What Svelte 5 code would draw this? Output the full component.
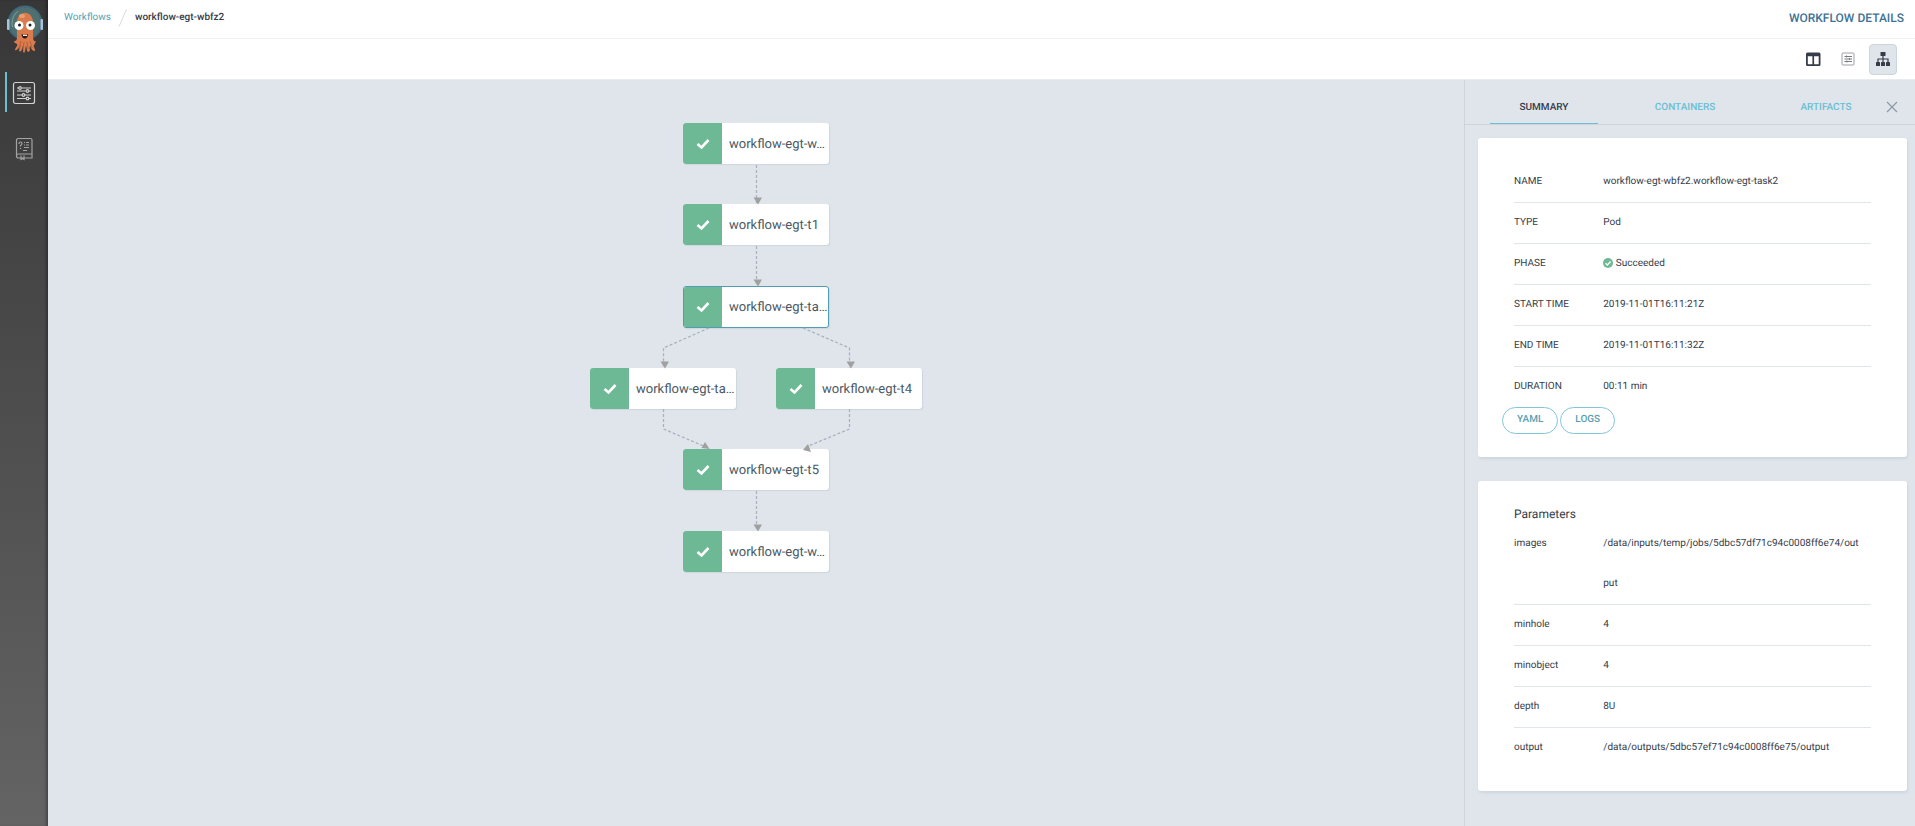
<script>
  const nodes = [
    { x: 683, y: 123, name: 'workflow-egt-w…' },
    { x: 683, y: 204, name: 'workflow-egt-t1' },
    { x: 683, y: 286, name: 'workflow-egt-ta…', selected: true },
    { x: 590, y: 368, name: 'workflow-egt-ta…' },
    { x: 776, y: 368, name: 'workflow-egt-t4' },
    { x: 683, y: 449, name: 'workflow-egt-t5' },
    { x: 683, y: 531, name: 'workflow-egt-w…' }
  ];
  // The canvas starts below the bars and right of the navigation.
  const originX = 48;
  const originY = 80;

  const edges = [
    'M756.5 165V204',
    'M756.5 246V286',
    'M709 328L663.5 348V368',
    'M803 328L849.5 348V368',
    'M663.5 409V429L706 447',
    'M849.5 409V429L806 447',
    'M756.5 491V531'
  ];
  const arrows = [
    'M753.500 197.500h8.500l-4 7z',
    'M753.500 279.500h8.500l-4 7z',
    'M660.500 361.500h8.500l-4 7z',
    'M846.500 361.500h8.500l-4 7z',
    'M705 442l4.500 7l-8 -1z',
    'M808 444l3 8l-8 -2z',
    'M753.500 524.500h8.500l-4 7z'
  ];

  const summary = [
    ['NAME', 'workflow-egt-wbfz2.workflow-egt-task2'],
    ['TYPE', 'Pod'],
    ['PHASE', 'Succeeded'],
    ['START TIME', '2019-11-01T16:11:21Z'],
    ['END TIME', '2019-11-01T16:11:32Z'],
    ['DURATION', '00:11 min']
  ];
  const parameters = [
    ['images', '/data/inputs/temp/jobs/5dbc57df71c94c0008ff6e74/output'],
    ['minhole', '4'],
    ['minobject', '4'],
    ['depth', '8U'],
    ['output', '/data/outputs/5dbc57ef71c94c0008ff6e75/output']
  ];
</script>

<div class="app">
  <nav class="sidebar">
    <a class="logo" href="#home" aria-label="Argo">
      <svg width="38" height="50" viewBox="0 0 38 50">
        <circle cx="19" cy="18" r="16.5" fill="#50706f" stroke="#42677c" stroke-width="2" />
        <rect x="1" y="14" width="2.500" height="11" rx="1" fill="#a9c3dc" />
        <rect x="34.500" y="14" width="2.500" height="11" rx="1" fill="#a9c3dc" />
        <path d="M6.500 22C5 15 8 9 12 6.500" fill="none" stroke="#7fa39c" stroke-width="1" />
        <path d="M11 19C10 4 28 4 27 19V31C27 36 29 37 30 36C29 40 27 40 28 42C29 45 30 46 28 46C25 45 25 42 24 41C23 43 25 47 22 47C20 45 21 43 20 41C19 43 20 46 18 48C16 46 18 43 17 41C16 43 16 48 13 46C13 44 15 42 14 40C13 43 11 46 9 45C9 43 12 41 11 39C10 38 8 38 8 36C11 36 11 34 11 31Z" fill="#d97b4c" />
        <path d="M15 36L13 44M18 37L17 44M21 37L22 44M24 36L26 43" fill="none" stroke="#b95f38" stroke-width="1" />
        <ellipse cx="16" cy="11" rx="3" ry="2" fill="#ec9c73" />
        <circle cx="13" cy="20.500" r="4.500" fill="#fff" />
        <circle cx="24.500" cy="20.500" r="4.500" fill="#fff" />
        <circle cx="13.500" cy="20" r="1.500" fill="#222" />
        <circle cx="24" cy="20" r="1.500" fill="#222" />
        <path d="M15.500 29Q19 31 22 29Q21.500 33.500 19 33.500Q16 33.500 15.500 29Z" fill="#2a1a1a" />
        <path d="M17 29.800Q19 30.500 21 29.800V31H17Z" fill="#fff" />
      </svg>
    </a>
    <a class="nav-item active" href="#workflows" aria-label="Workflows">
      <svg width="24" height="24" viewBox="0 0 24 24" fill="none" stroke="#d2d2d2" stroke-width="1.200">
        <rect x="1.500" y="1.500" width="21" height="21" rx="2" />
        <path d="M5 7h2M9.500 7H19M5 10h9M17 10h2M5 14h5M13 14h6M5 17.500h9M17 17.500h2" />
        <circle cx="8" cy="7" r="1.300" /><circle cx="15.500" cy="10" r="1.300" />
        <circle cx="11.500" cy="14" r="1.300" /><circle cx="15.500" cy="17.500" r="1.300" />
      </svg>
    </a>
    <a class="nav-item" href="#docs" aria-label="Documentation">
      <svg width="24" height="24" viewBox="0 0 24 24" fill="none" stroke="#a3a3a3" stroke-width="1.200">
        <path d="M6.500 1.500h12q1.500 0 1.500 1.500v18H6.500q-2 0-2-2V3.500q0-2 2-2zM4.500 19q0-2 2-2H20" />
        <path d="M7 7q0-2 1.500-2t1.500 1.500q0 1-1.500 2v1M8.500 11v1M12 5.500h1M14 5.500h3M12 8h1M14 8h3M12 10.500h5M11 13.500h4" />
        <path d="M9 18.500v4l1.500-1l1.500 1v-4" />
      </svg>
    </a>
  </nav>

  <div class="main">
    <header class="topbar">
      <div class="crumbs">
        <a href="#workflows">Workflows</a>
        <svg width="10" height="18" viewBox="0 0 10 18"><path d="M1 17.500L8.500 .500" stroke="#d5d9dd" fill="none" /></svg>
        <strong>workflow-egt-wbfz2</strong>
      </div>
      <h1>WORKFLOW DETAILS</h1>
    </header>

    <div class="toolbar">
      <button aria-label="Summary view">
        <svg width="16" height="16" viewBox="0 0 16 16"><path fill="#363c4a" fill-rule="evenodd" d="M2.500 1.500h11.500q1.500 0 1.500 1.500v10.500q0 1.500-1.500 1.500h-11.500Q1 15 1 13.500V3q0-1.500 1.500-1.500zM2.800 5.200v8h4.600v-8zM9.100 5.200v8H13.700v-8z" /></svg>
      </button>
      <button aria-label="Timeline view">
        <svg width="14" height="14" viewBox="0 0 14 14" fill="none" stroke="#9c9fa5"><rect x="1" y="1" width="12" height="12" rx="1" /><path stroke="#777b83" d="M3.500 4.500H11M3.500 7H11M3.500 9.500H11M5.500 3.500v2M8.500 6v2M6 8.500v2" /></svg>
      </button>
      <button class="on" aria-label="Graph view">
        <svg width="16" height="16" viewBox="0 0 16 16"><g fill="#363c4a"><rect x="5.500" y="1" width="5" height="4" rx=".5" /><rect x="1" y="11" width="4" height="4" rx=".5" /><rect x="6" y="11" width="4" height="4" rx=".5" /><rect x="11" y="11" width="4" height="4" rx=".5" /></g><path d="M8 5v6M3 11V8h10v3" fill="none" stroke="#363c4a" stroke-width="1.200" /></svg>
      </button>
    </div>

    <div class="content">
      <main class="canvas">
        {#each nodes as n}
          <button class="node" class:selected={n.selected} style="left:{n.x - originX}px;top:{n.y - originY}px">
            <span class="state">
              <svg width="14" height="12" viewBox="0 0 14 12"><path d="M1.500 6L5.500 9.500L12.500 2" fill="none" stroke="#fff" stroke-width="2.600" /></svg>
            </span>
            <span class="name">{n.name}</span>
          </button>
        {/each}
        <svg class="edges" width="940" height="520" viewBox="48 80 940 520">
          {#each edges as d}<path {d} fill="none" stroke="#a9b3c0" stroke-dasharray="3 2" stroke-width="1.300" />{/each}
          {#each arrows as d}<path {d} fill="#a0a0a0" />{/each}
        </svg>
      </main>

      <aside class="panel">
        <div class="tabs" role="tablist">
          <button role="tab" aria-selected="true" class="current">SUMMARY</button>
          <button role="tab" aria-selected="false">CONTAINERS</button>
          <button role="tab" aria-selected="false">ARTIFACTS</button>
          <button class="close" aria-label="Close">
            <svg width="12" height="12" viewBox="0 0 12 12"><path d="M1 1L11 11M11 1L1 11" stroke="#8b9aa5" stroke-width="1.200" /></svg>
          </button>
        </div>

        <section class="card">
          <dl>
            {#each summary as [label, value]}
              <div class="row">
                <dt>{label}</dt>
                <dd>
                  {#if label === 'PHASE'}
                    <svg class="ok" width="10" height="10" viewBox="0 0 10 10"><circle cx="5" cy="5" r="5" fill="#6eb995" /><path d="M2.500 5.200L4.300 7L7.600 3.500" fill="none" stroke="#fff" stroke-width="1.300" /></svg>
                  {/if}
                  {value}
                </dd>
              </div>
            {/each}
          </dl>
          <div class="actions">
            <button>YAML</button>
            <button>LOGS</button>
          </div>
        </section>

        <section class="card">
          <h2>Parameters</h2>
          <dl>
            {#each parameters as [label, value]}
              <div class="row"><dt>{label}</dt><dd>{value}</dd></div>
            {/each}
          </dl>
        </section>
      </aside>
    </div>
  </div>
</div>

<style>
  :global(body) { margin: 0; }
  .app {
    display: flex;
    min-height: 100vh;
    font-family: Roboto, "Liberation Sans", sans-serif;
    font-size: 10px;
    text-rendering: geometricPrecision;
    color: #363c4a;
    background: #e0e5ec;
  }
  .app * { box-sizing: border-box; }
  button { font: inherit; text-rendering: inherit; border: 0; background: none; padding: 0; margin: 0; cursor: pointer; }
  svg { display: block; flex: none; }
  a { text-decoration: none; }
  .sidebar {
    flex: none;
    width: 48px;
    background: linear-gradient(#373737, #646464);
    box-shadow: inset -3px 0 3px -1px rgba(0, 0, 0, 0.3);
  }
  .logo { display: block; padding: 5px 0 0 6px; height: 72px; }
  .nav-item {
    display: flex;
    align-items: center;
    height: 40px;
    margin: 0 0 16px 5px;
    padding: 2px 0 0 5px;
    border-left: 2px solid transparent;
  }
  .nav-item.active { border-color: #6bbfd3; }
  .main { flex: 1; min-width: 0; display: flex; flex-direction: column; }
  .topbar {
    display: flex;
    align-items: center;
    justify-content: space-between;
    height: 39px;
    padding: 0 11px 3px 16px;
    background: #fff;
    border-bottom: 1px solid #eef0f2;
  }
  .crumbs { display: flex; align-items: center; gap: 7px; }
  .crumbs a { color: #599fb2; }
  .crumbs strong { font-weight: 500; }
  h1 { margin: 0; font-size: 12px; font-weight: 500; color: #3f7294; }
  .toolbar {
    display: flex;
    align-items: center;
    justify-content: flex-end;
    gap: 7px;
    height: 41px;
    padding-right: 18px;
    background: #fff;
    border-bottom: 1px solid #e9ecef;
  }
  .toolbar button {
    display: flex;
    align-items: center;
    justify-content: center;
    width: 28px;
    height: 31px;
    border: 1px solid transparent;
    border-radius: 4px;
  }
  .toolbar .on { background: #dfe5ea; border-color: #cbd5dc; }
  .content { flex: 1; display: flex; }
  .canvas { position: relative; flex: 1; min-width: 0; }
  .edges { position: absolute; left: 0; top: 0; pointer-events: none; }
  .node {
    position: absolute;
    display: flex;
    width: 146px;
    height: 41px;
    border-radius: 3px;
    overflow: hidden;
    background: #fff;
    box-shadow: 1px 1px 1px #ccd6dd;
    color: #495763;
    font-size: 13px;
    text-align: left;
  }
  .node.selected { border: 1px solid #4f9db3; height: 42px; }
  .state {
    flex: none;
    display: flex;
    align-items: center;
    justify-content: center;
    width: 39px;
    align-self: stretch;
    background: #6eb995;
  }
  .selected .state { width: 38px; }
  .name { align-self: center; padding: 1px 0 0 7px; white-space: nowrap; }
  .panel { flex: none; width: 451px; border-left: 1px solid #ccd4dd; }
  .tabs {
    display: flex;
    align-items: flex-end;
    height: 45px;
    padding-left: 25px;
    border-bottom: 1px solid #ccd4dd;
    font-weight: 500;
  }
  .tabs button {
    flex: none;
    width: 108px;
    height: 32px;
    margin-right: 33px;
    color: #6bbfd3;
    border-bottom: 1px solid transparent;
  }
  .tabs .current { color: #363c4a; border-color: #6bbfd3; }
  .tabs .close { width: 12px; height: 23px; margin: 0 0 0 -27px; padding: 0 0 11px; }
  .card {
    margin: 13px 8px 24px 13px;
    padding: 24px 36px 23px;
    background: #fff;
    border-radius: 3px;
    box-shadow: 1px 2px 3px #ccd6dd;
  }
  .card + .card { margin-top: 0; }
  dl, dd, dt { margin: 0; }
  .row {
    display: flex;
    line-height: 40px;
    border-bottom: 1px solid #dee6eb;
  }
  .row:last-child { border-bottom: 0; }
  dt { flex: none; width: 25%; }
  dd { flex: 1; min-width: 0; padding-right: 8px; word-break: break-all; }
  .ok { display: inline-block; vertical-align: -2px; }
  .actions { display: flex; gap: 2px; margin-left: -12px; }
  .actions button {
    height: 27px;
    padding: 0 14px 2px;
    border: 1px solid #7fc6d9;
    border-radius: 14px;
    color: #599fb2;
    font-weight: 500;
  }
  h2 { margin: 0; font-size: 12px; font-weight: 400; line-height: 19px; }
</style>
